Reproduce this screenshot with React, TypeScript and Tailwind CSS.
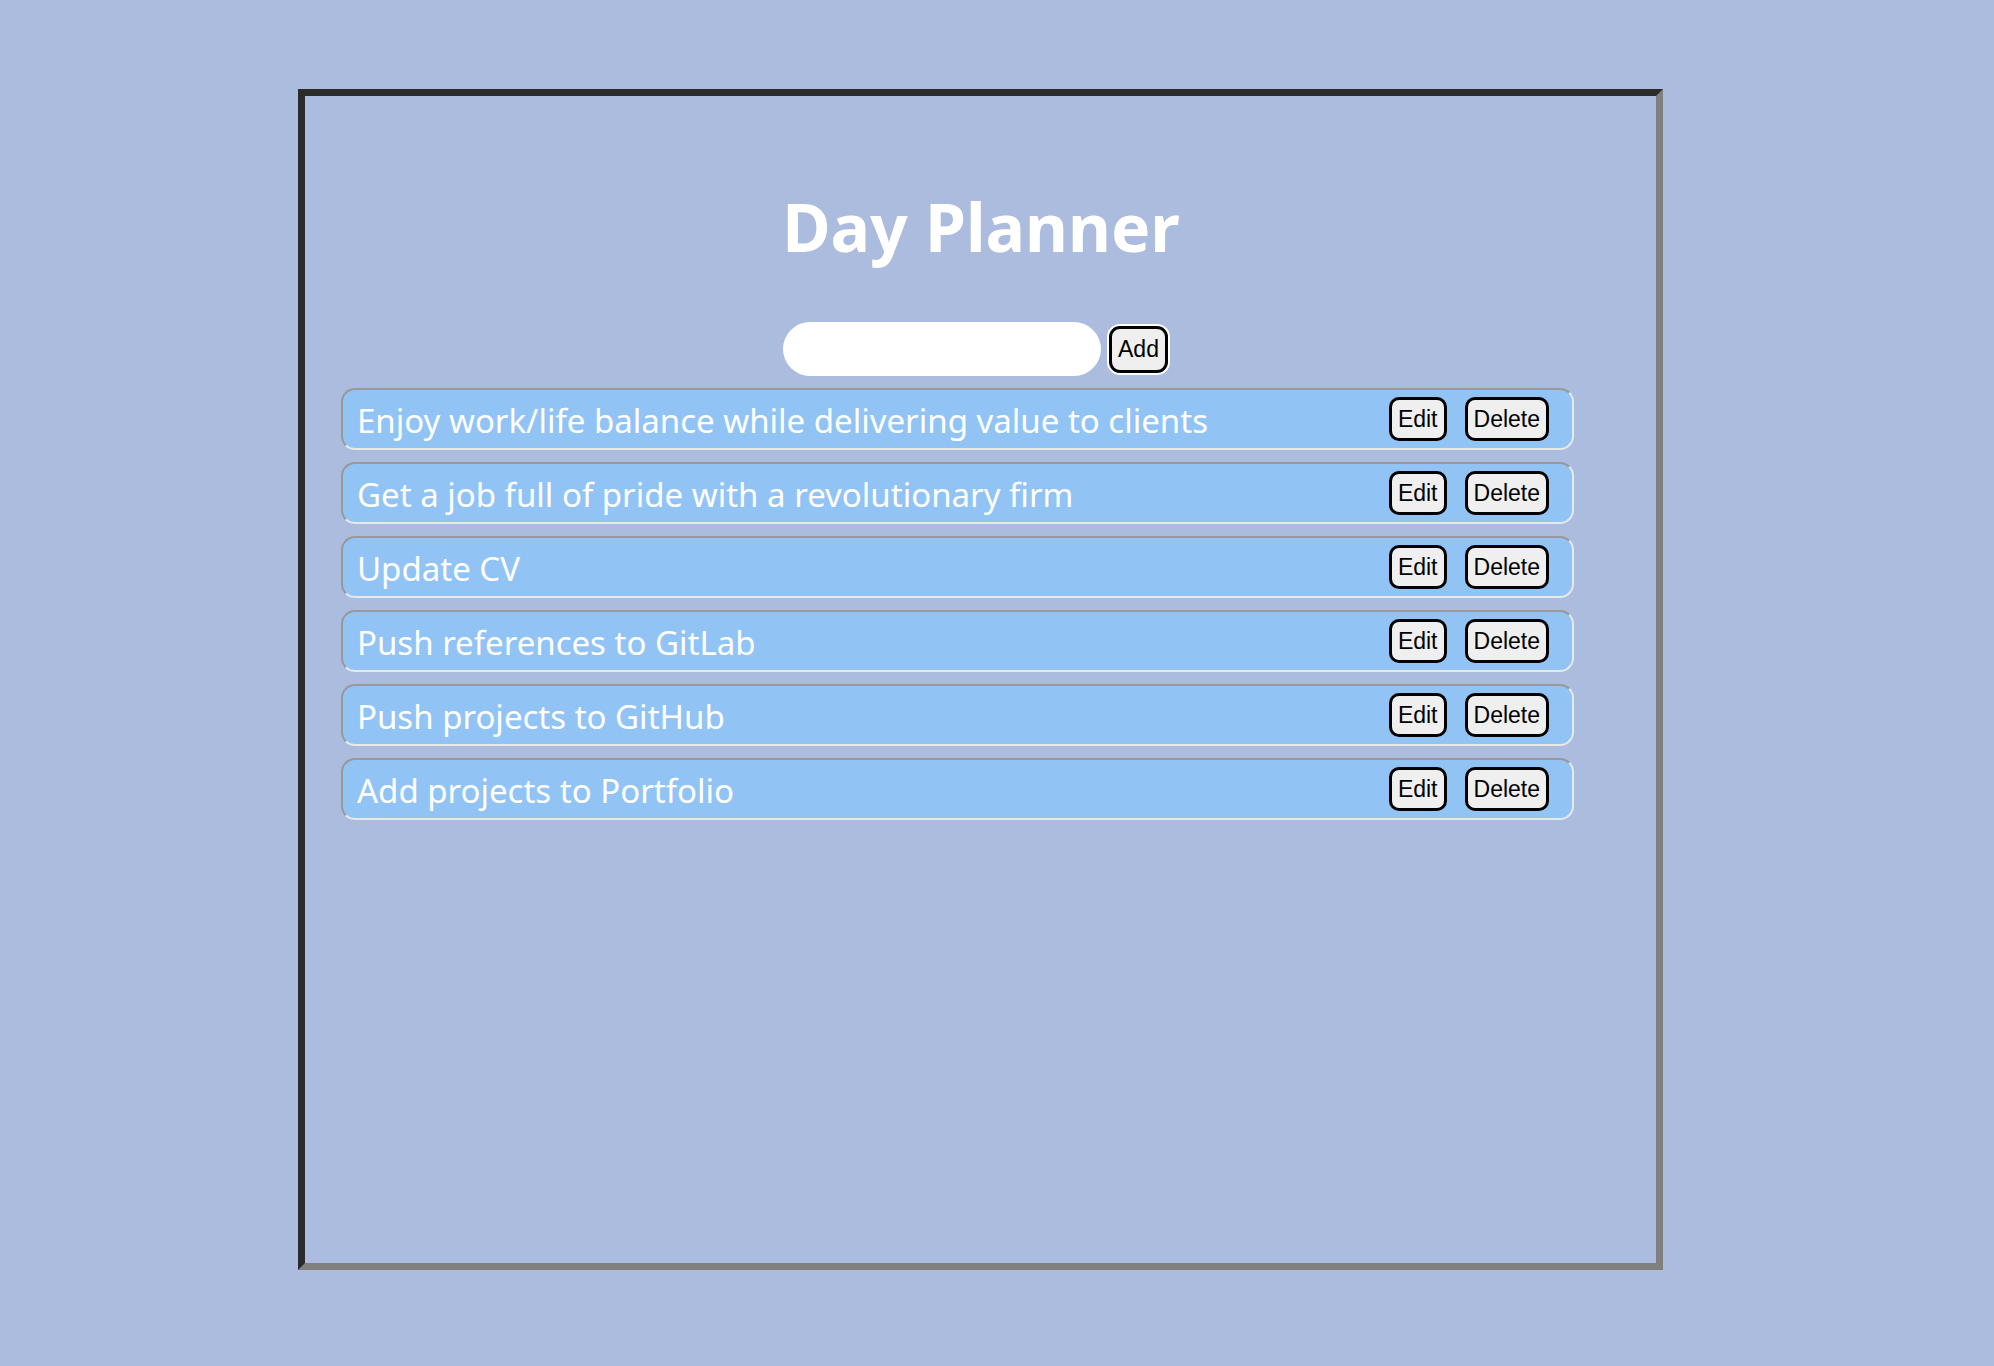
const tasks = [
  "Enjoy work/life balance while delivering value to clients",
  "Get a job full of pride with a revolutionary firm",
  "Update CV",
  "Push references to GitLab",
  "Push projects to GitHub",
  "Add projects to Portfolio",
];

const btn =
  "h-[44px] px-[6px] rounded-[10px] border-[3px] border-black bg-[#efefef] text-black text-[23px] leading-none font-['Liberation_Sans',Arial,sans-serif]";

function TaskRow({ text }: { text: string }) {
  return (
    <li className="flex h-[62px] items-center rounded-[14px] border-2 border-t-[#999999] border-l-[#999999] border-r-[#e8e8e8] border-b-[#e8e8e8] bg-[#91c4f5] pl-[14px] pr-[23px]">
      <span className="flex-1 text-white text-[33px] leading-none pt-[2px]">{text}</span>
      <button className={btn}>Edit</button>
      <button className={`${btn} ml-[18px]`}>Delete</button>
    </li>
  );
}

export default function App() {
  return (
    <div className="min-h-screen bg-[#acbcde] pt-[89px] font-['Noto_Sans','Open_Sans',sans-serif]">
      <div className="ml-[298px] w-[1365px] h-[1181px] border-[7px] border-t-[#2b2b2b] border-l-[#2b2b2b] border-r-[#808080] border-b-[#808080]">
        <h1 className="mt-[92px] text-center text-white font-bold text-[66px] leading-[76px] pl-[1px]">
          Day Planner
        </h1>
        <div className="mt-[58px] flex items-center justify-center pr-[10px]">
          <input className="h-[54px] w-[318px] rounded-full bg-white outline-none" />
          <button className="ml-[8px] h-[47px] w-[59px] rounded-[11px] border-[3px] border-black bg-[#efefef] text-black text-[23px] leading-none ring-2 ring-white font-['Liberation_Sans',Arial,sans-serif]">
            Add
          </button>
        </div>
        <ul className="mt-[12px] ml-[36px] w-[1233px] flex flex-col gap-[12px]">
          {tasks.map((t) => (
            <TaskRow key={t} text={t} />
          ))}
        </ul>
      </div>
    </div>
  );
}
